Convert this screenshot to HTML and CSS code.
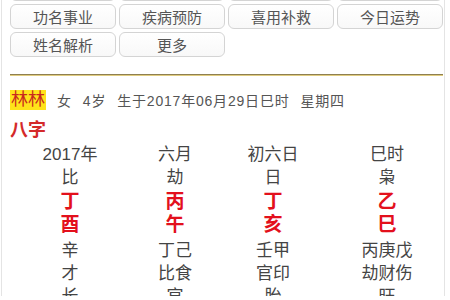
FILE: index.html
```html
<!DOCTYPE html>
<html lang="zh">
<head>
<meta charset="utf-8">
<link rel="stylesheet" href="styles.css">
</head>
<body>
<div class="page">
  <div class="btns">
    <div class="btn"></div>
    <div class="btn"></div>
    <div class="btn"></div>
    <div class="btn"></div>
    <div class="btn">功名事业</div>
    <div class="btn">疾病预防</div>
    <div class="btn">喜用补救</div>
    <div class="btn">今日运势</div>
    <div class="btn">姓名解析</div>
    <div class="btn">更多</div>
  </div>
  <div class="sep"></div>
  <div class="info">
    <span class="name">林林</span>
    <span class="item">女</span>
    <span class="item">4岁</span>
    <span class="item">生于2017年06月29日巳时</span>
    <span class="item">星期四</span>
  </div>
  <div class="title">八字</div>
  <div class="bazi">
    <div class="c">2017年</div><div class="c">六月</div><div class="c">初六日</div><div class="c">巳时</div>
    <div class="c shen">比</div><div class="c shen">劫</div><div class="c shen">日</div><div class="c shen">枭</div>
    <div class="c red">丁</div><div class="c red">丙</div><div class="c red">丁</div><div class="c red">乙</div>
    <div class="c red last">酉</div><div class="c red last">午</div><div class="c red last">亥</div><div class="c red last">巳</div>
    <div class="c">辛</div><div class="c">丁己</div><div class="c">壬甲</div><div class="c">丙庚戊</div>
    <div class="c">才</div><div class="c">比食</div><div class="c">官印</div><div class="c">劫财伤</div>
    <div class="c">长</div><div class="c">官</div><div class="c">胎</div><div class="c">旺</div>
  </div>
</div>
</body>
</html>
```
FILE: styles.css
```css
html, body {
  margin: 0;
  padding: 0;
  background: #ffffff;
  overflow: hidden;
}
body {
  font-family: "Liberation Sans", "Noto Sans CJK SC", sans-serif;
  color: #555;
}
.page {
  margin: 0 5px 0 1px;
  border-left: 1px solid #e4e4e4;
  border-right: 1px solid #e4e4e4;
  padding: 0 1px 0 8px;
  height: 320px;
}
.btns {
  display: grid;
  grid-template-columns: repeat(4, 1fr);
  grid-auto-rows: 25px;
  gap: 3px 3px;
  margin-top: -24px;
}
.btn {
  border: 1px solid #d4d4d4;
  border-radius: 6px;
  background: linear-gradient(#ffffff, #f8f8f8);
  display: flex;
  align-items: center;
  justify-content: center;
  font-size: 15px;
  color: #555;
}
.sep {
  margin-top: 17px;
  height: 1px;
  background: #8f8050;
  border-bottom: 1px solid #e0cc80;
}
.info {
  margin-top: 14px;
  height: 20px;
  display: flex;
  align-items: center;
  font-size: 14px;
  letter-spacing: 0.8px;
  color: #555;
}
.name {
  background: #ffe31a;
  color: #c8281e;
  font-size: 17px;
  line-height: 20px;
  letter-spacing: 0;
  padding: 0 1px;
}
.item {
  margin-left: 11px;
}
.title {
  margin-top: 10px;
  height: 20px;
  line-height: 20px;
  font-size: 18px;
  font-weight: bold;
  color: #d42a2a;
}
.bazi {
  margin-top: 4px;
  display: grid;
  grid-template-columns: 120px 90px 106px 122px;
}
.c {
  text-align: center;
  font-size: 17px;
  line-height: 23px;
  height: 23px;
  color: #444;
}
.c:nth-child(-n+4) {
  height: 22px;
  line-height: 22px;
}
.shen {
  height: 24px;
  line-height: 24px;
}
.red {
  color: #e3101c;
  font-weight: bold;
  font-size: 19px;
  height: 23px;
  line-height: 23px;
}
.last {
  margin-bottom: 3px;
}
```
